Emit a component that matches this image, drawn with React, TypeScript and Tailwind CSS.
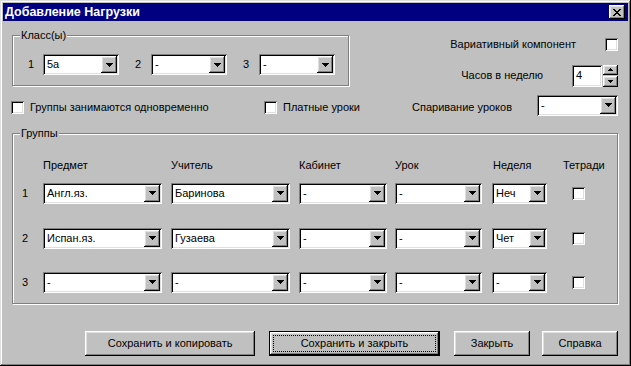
import React from 'react';

const FIELD =
  'shadow-[inset_1px_1px_0_#808080,inset_-1px_-1px_0_#ffffff,inset_2px_2px_0_#000000,inset_-2px_-2px_0_#dfdfdf]';
const RAISED =
  'shadow-[inset_-1px_-1px_0_#000000,inset_1px_1px_0_#ffffff,inset_-2px_-2px_0_#808080,inset_2px_2px_0_#dfdfdf]';
const FRAME =
  'shadow-[inset_-1px_-1px_0_#000000,inset_1px_1px_0_#dfdfdf,inset_-2px_-2px_0_#808080,inset_2px_2px_0_#ffffff]';
const ETCHED = 'border border-[#808080] shadow-[1px_1px_0_#ffffff,inset_1px_1px_0_#ffffff]';

const DownArrow = () => (
  <svg width="7" height="4" viewBox="0 0 7 4" shapeRendering="crispEdges">
    <path d="M0 0h7v1H0zM1 1h5v1H1zM2 2h3v1H2zM3 3h1v1H3z" fill="#000" />
  </svg>
);

const Combo: React.FC<{ className: string; value: string }> = ({ className, value }) => (
  <div className={`${className} h-[21px] shrink-0 bg-white ${FIELD} flex items-center p-[2px]`}>
    <span className="flex-1 pl-[2px] leading-[13px] whitespace-nowrap overflow-hidden">{value}</span>
    <div className={`w-[16px] h-[17px] bg-[#c0c0c0] ${RAISED} flex items-center justify-center`}>
      <DownArrow />
    </div>
  </div>
);

const Check = () => <div className={`w-[13px] h-[13px] shrink-0 bg-white ${FIELD}`} />;

const rows = [
  { n: '1', subj: 'Англ.яз.', teacher: 'Баринова', week: 'Неч' },
  { n: '2', subj: 'Испан.яз.', teacher: 'Гузаева', week: 'Чет' },
  { n: '3', subj: '-', teacher: '-', week: '-' },
];

const App: React.FC = () => {
  return (
    <div
      className={`w-[631px] h-[366px] bg-[#c0c0c0] ${FRAME} flex flex-col font-['Liberation_Sans',Arial,sans-serif] text-[11px] text-black select-none`}
    >
      {/* Title bar */}
      <div className="mt-[3px] mx-[3px] h-[18px] bg-[#000080] flex items-center justify-between pl-[2px] pr-[3px]">
        <span className="text-white font-bold text-[12.5px] leading-none">Добавление Нагрузки</span>
        <div className={`w-[16px] h-[14px] bg-[#c0c0c0] ${RAISED} flex items-center justify-center`}>
          <svg width="8" height="7" viewBox="0 0 8 7" shapeRendering="crispEdges">
            <path
              d="M0 0h2v1H0zM6 0h2v1H6zM1 1h2v1H1zM5 1h2v1H5zM2 2h4v1H2zM3 3h2v1H3zM2 4h4v1H2zM1 5h2v1H1zM5 5h2v1H5zM0 6h2v1H0zM6 6h2v1H6z"
              fill="#000"
            />
          </svg>
        </div>
      </div>

      <div className="pl-[11px] pr-[13px] flex flex-col">
        {/* Classes + right options */}
        <div className="mt-[14px] flex items-start">
          <div className={`relative ml-[1px] w-[337px] h-[51px] ${ETCHED}`}>
            <span className="absolute -top-[7px] left-[7px] px-[1px] bg-[#c0c0c0] leading-[13px]">Класс(ы)</span>
            <div className="pt-[18px] pl-[15px] flex items-center">
              <span className="w-[15px]">1</span>
              <Combo className="w-[76px]" value="5а" />
              <span className="ml-[16px] w-[16px]">2</span>
              <Combo className="w-[76px]" value="-" />
              <span className="ml-[16px] w-[16px]">3</span>
              <Combo className="w-[76px]" value="-" />
            </div>
          </div>
          <div className="flex-1 flex flex-col items-end">
            <div className="mt-[1px] flex items-center">
              <span>Вариативный компонент</span>
              <div className="ml-[29px]">
                <Check />
              </div>
            </div>
            <div className="mt-[12px] flex items-center">
              <span>Часов в неделю</span>
              <div className={`ml-[29px] w-[30px] h-[22px] bg-white ${FIELD} flex items-center pl-[4px]`}>4</div>
              <div className="ml-[1px] flex flex-col gap-[1px]">
                <div className={`w-[15px] h-[10px] bg-[#c0c0c0] ${RAISED} flex items-center justify-center`}>
                  <svg width="5" height="3" viewBox="0 0 5 3" shapeRendering="crispEdges">
                    <path d="M2 0h1v1H2zM1 1h3v1H1zM0 2h5v1H0z" fill="#000" />
                  </svg>
                </div>
                <div className={`w-[15px] h-[11px] bg-[#c0c0c0] ${RAISED} flex items-center justify-center`}>
                  <svg width="5" height="3" viewBox="0 0 5 3" shapeRendering="crispEdges">
                    <path d="M0 0h5v1H0zM1 1h3v1H1zM2 2h1v1H2z" fill="#000" />
                  </svg>
                </div>
              </div>
            </div>
          </div>
        </div>

        {/* Options row */}
        <div className="mt-[8px] h-[21px] flex items-center">
          <div className="w-[253px] flex items-center mt-[4px]">
            <Check />
            <span className="ml-[6px]">Группы занимаются одновременно</span>
          </div>
          <div className="w-[148px] flex items-center mt-[4px]">
            <Check />
            <span className="ml-[6px]">Платные уроки</span>
          </div>
          <span className="flex-1 mt-[4px]">Спаривание уроков</span>
          <Combo className="w-[81px]" value="-" />
        </div>

        {/* Groups */}
        <div className={`relative mt-[17px] ml-[1px] w-[606px] h-[171px] ${ETCHED}`}>
          <span className="absolute -top-[7px] left-[7px] px-[1px] bg-[#c0c0c0] leading-[13px]">Группы</span>
          <div className="pl-[9px] pt-[25px]">
            <div className="grid grid-cols-[21px_128px_128px_96px_97px_71px_1fr] leading-[13px]">
              <span />
              <span>Предмет</span>
              <span>Учитель</span>
              <span>Кабинет</span>
              <span>Урок</span>
              <span className="pl-[1px]">Неделя</span>
              <span>Тетради</span>
            </div>
            {rows.map((r, i) => (
              <div
                key={r.n}
                className={`grid grid-cols-[21px_128px_128px_96px_97px_71px_1fr] items-center ${
                  i === 0 ? 'mt-[11px]' : i === 1 ? 'mt-[24px]' : 'mt-[23px]'
                }`}
              >
                <span>{r.n}</span>
                <Combo className="w-[119px]" value={r.subj} />
                <Combo className="w-[119px]" value={r.teacher} />
                <Combo className="w-[88px]" value="-" />
                <Combo className="w-[87px]" value="-" />
                <Combo className="w-[55px]" value={r.week} />
                <div className="ml-[9px]">
                  <Check />
                </div>
              </div>
            ))}
          </div>
        </div>

        {/* Buttons */}
        <div className="mt-[27px] flex items-start">
          <button className={`ml-[74px] w-[171px] h-[25px] bg-[#c0c0c0] ${RAISED}`}>Сохранить и копировать</button>
          <button
            className={`ml-[14px] w-[171px] h-[25px] bg-[#c0c0c0] border border-black shadow-[inset_-1px_-1px_0_#000000,inset_1px_1px_0_#ffffff,inset_-2px_-2px_0_#808080,inset_2px_2px_0_#dfdfdf] outline-1 outline-dotted outline-black outline-offset-[-5px]`}
          >
            Сохранить и закрыть
          </button>
          <button className={`ml-[14px] w-[77px] h-[25px] bg-[#c0c0c0] ${RAISED}`}>Закрыть</button>
          <button className={`ml-[12px] w-[76px] h-[25px] bg-[#c0c0c0] ${RAISED}`}>Справка</button>
        </div>
      </div>
    </div>
  );
};

export default App;
